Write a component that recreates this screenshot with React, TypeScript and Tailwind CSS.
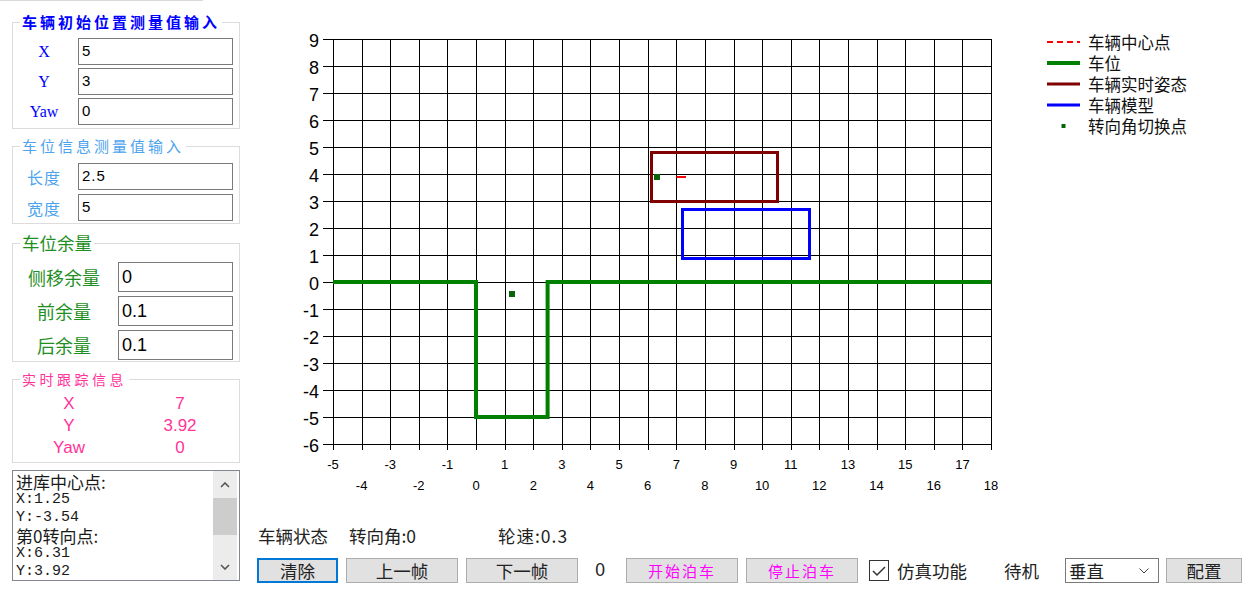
import React from "react";

const CJK = "font-['Noto_Sans_CJK_SC',sans-serif]";
const ARIAL = "font-['Liberation_Sans','Noto_Sans_CJK_SC',sans-serif]";
const SERIF = "font-['Liberation_Serif','Noto_Sans_CJK_SC',serif]";
const MONO = "font-['Liberation_Mono','Noto_Sans_CJK_SC',monospace]";

function Chart() {
  const X0 = 83;
  const XS = 658 / 23;
  const Y0 = 39;
  const YS = 27;
  const sx = (v: number) => X0 + (v + 5) * XS;
  const sy = (v: number) => Y0 + (9 - v) * YS;
  const p = (n: number) => Math.round(n) + 0.5;
  const xs = Array.from({ length: 24 }, (_, i) => i - 5);
  const ys = Array.from({ length: 16 }, (_, i) => i - 6);
  const green = [
    [-5, 0],
    [0, 0],
    [0, -5],
    [2.5, -5],
    [2.5, 0],
    [18, 0],
  ]
    .map(([a, b]) => `${sx(a).toFixed(1)},${sy(b).toFixed(1)}`)
    .join(" ");
  return (
    <svg
      width={780}
      height={520}
      className="shrink-0 block"
      fontFamily="'Liberation Sans', Arial, sans-serif"
    >
      {xs.map((v) => (
        <line key={"v" + v} x1={p(sx(v))} x2={p(sx(v))} y1={39} y2={450} stroke="#000" strokeWidth={1} />
      ))}
      {ys.map((v) => (
        <line key={"h" + v} x1={73} x2={742} y1={p(sy(v))} y2={p(sy(v))} stroke="#000" strokeWidth={1} />
      ))}
      {ys.map((v) => (
        <text key={"yl" + v} x={69} y={sy(v) + 8} textAnchor="end" fontSize={18} fill="#000">
          {v}
        </text>
      ))}
      {xs.map((v) => (
        <text
          key={"xl" + v}
          x={sx(v)}
          y={Math.abs(v) % 2 === 1 ? 469 : 490}
          textAnchor="middle"
          fontSize={13}
          fill="#000"
        >
          {v}
        </text>
      ))}
      <polyline points={green} fill="none" stroke="#008000" strokeWidth={4} strokeLinejoin="miter" />
      <rect x={401.5} y={152.5} width={126} height={49} fill="none" stroke="#800000" strokeWidth={3} />
      <rect x={432.5} y={209.5} width={127} height={49} fill="none" stroke="#0000ff" strokeWidth={3} />
      <rect x={404} y={174} width={6} height={6} fill="#0a640a" />
      <line x1={426.5} x2={436} y1={177} y2={177} stroke="#ff0000" strokeWidth={2} />
      <rect x={259} y={291} width={6} height={6} fill="#0a640a" />
    </svg>
  );
}

function Legend() {
  return (
    <div className={`flex-1 flex flex-col pt-[31px] ${CJK} text-[16.5px] text-[#111]`}>
      <div className="h-[21px] flex items-center">
        <svg width={33} height={8} className="ml-[17px] shrink-0">
          <line x1={0} x2={33} y1={4} y2={4} stroke="#ff0000" strokeWidth={2} strokeDasharray="6 4" />
        </svg>
        <span className="ml-[8px] leading-[18px]">车辆中心点</span>
      </div>
      <div className="h-[21px] flex items-center">
        <svg width={33} height={8} className="ml-[17px] shrink-0">
          <line x1={0} x2={33} y1={4} y2={4} stroke="#008000" strokeWidth={4} />
        </svg>
        <span className="ml-[8px] leading-[18px]">车位</span>
      </div>
      <div className="h-[21px] flex items-center">
        <svg width={33} height={8} className="ml-[17px] shrink-0">
          <line x1={0} x2={33} y1={4} y2={4} stroke="#800000" strokeWidth={3} />
        </svg>
        <span className="ml-[8px] leading-[18px]">车辆实时姿态</span>
      </div>
      <div className="h-[21px] flex items-center">
        <svg width={33} height={8} className="ml-[17px] shrink-0">
          <line x1={0} x2={33} y1={4} y2={4} stroke="#0000ff" strokeWidth={3} />
        </svg>
        <span className="ml-[8px] leading-[18px]">车辆模型</span>
      </div>
      <div className="h-[21px] flex items-center">
        <svg width={33} height={8} className="ml-[17px] shrink-0">
          <rect x={14.5} y={2} width={4} height={4} fill="#0a640a" />
        </svg>
        <span className="ml-[8px] leading-[18px]">转向角切换点</span>
      </div>
    </div>
  );
}

function LeftPanel() {
  const g1 = [
    ["X", "5"],
    ["Y", "3"],
    ["Yaw", "0"],
  ];
  const g2 = [
    ["长度", "2.5"],
    ["宽度", "5"],
  ];
  const g3 = [
    ["侧移余量", "0"],
    ["前余量", "0.1"],
    ["后余量", "0.1"],
  ];
  const g4 = [
    ["X", "7"],
    ["Y", "3.92"],
    ["Yaw", "0"],
  ];
  return (
    <div className={`w-[250px] shrink-0 flex flex-col pl-[12px] ${CJK}`}>
      <div className="-ml-[12px] w-[203px] h-[1px] bg-[#d9d9d9]" />

      <fieldset className="mt-[11px] w-[228px] border border-[#dcdcdc] pb-[3px]">
        <legend className="ml-[7px] px-[2px] text-[15px] leading-[20px] font-bold tracking-[3px] text-[#0000ff]">
          车辆初始位置测量值输入
        </legend>
        <div className="flex flex-col gap-[3px] pt-[6px]">
          {g1.map(([l, v]) => (
            <div key={l} className="flex items-center h-[27px]">
              <div className={`w-[62px] text-center text-[16px] leading-none text-[#0000ff] ${SERIF}`}>{l}</div>
              <div
                className={`ml-[3px] w-[155px] h-[27px] border border-[#7a7a7a] px-[3px] flex items-center text-[15px] text-black ${ARIAL}`}
              >
                {v}
              </div>
            </div>
          ))}
        </div>
      </fieldset>

      <fieldset className="mt-[7px] w-[228px] border border-[#dcdcdc] pb-[2px]">
        <legend className="ml-[7px] px-[2px] text-[15px] leading-[20px] tracking-[3px] text-[#4da3ee]">
          车位信息测量值输入
        </legend>
        <div className="flex flex-col gap-[4px] pt-[7px]">
          {g2.map(([l, v]) => (
            <div key={l} className="flex items-center h-[27px]">
              <div className="w-[62px] text-center text-[16px] tracking-[1px] leading-none text-[#4da3ee]">{l}</div>
              <div
                className={`ml-[3px] w-[155px] h-[27px] border border-[#7a7a7a] px-[3px] flex items-center text-[15px] tracking-[1px] text-black ${ARIAL}`}
              >
                {v}
              </div>
            </div>
          ))}
        </div>
      </fieldset>

      <fieldset className="mt-[7px] w-[228px] border border-[#dcdcdc] pb-[1px]">
        <legend className="ml-[7px] px-[2px] text-[17.5px] leading-[24px] text-[#1f8f1f]">车位余量</legend>
        <div className="flex flex-col gap-[4px] pt-[7px]">
          {g3.map(([l, v]) => (
            <div key={l} className="flex items-center h-[30px]">
              <div className="w-[102px] text-center text-[18px] leading-none text-[#1f8f1f]">{l}</div>
              <div
                className={`ml-[3px] w-[115px] h-[30px] border border-[#7a7a7a] px-[3px] flex items-center text-[18px] text-black ${ARIAL}`}
              >
                {v}
              </div>
            </div>
          ))}
        </div>
      </fieldset>

      <fieldset className="mt-[7px] w-[228px] border border-[#dcdcdc] pb-[4px]">
        <legend className="ml-[7px] px-[2px] text-[14px] leading-[20px] tracking-[3.5px] text-[#ff3399]">
          实时跟踪信息
        </legend>
        <div className={`flex flex-col pt-[3px] text-[17px] text-[#ff3399] ${ARIAL}`}>
          {g4.map(([l, v]) => (
            <div key={l} className="flex items-center h-[22px]">
              <div className="w-[112px] text-center leading-none">{l}</div>
              <div className="w-[110px] text-center leading-none">{v}</div>
            </div>
          ))}
        </div>
      </fieldset>

      <div className="mt-[7px] w-[228px] h-[111px] border border-[#828790] flex">
        <div className="flex-1 pl-[3px] pt-[1px] text-[#1a1a1a]">
          <div className="h-[18px] flex items-center whitespace-nowrap text-[17px] leading-none">进库中心点:</div>
          <div className={`h-[18px] flex items-center ${MONO} text-[15px] leading-none`}>X:1.25</div>
          <div className={`h-[18px] flex items-center ${MONO} text-[15px] leading-none`}>Y:-3.54</div>
          <div className="h-[18px] flex items-center whitespace-nowrap text-[17px] leading-none">第0转向点:</div>
          <div className={`h-[18px] flex items-center ${MONO} text-[15px] leading-none`}>X:6.31</div>
          <div className={`h-[18px] flex items-center ${MONO} text-[15px] leading-none`}>Y:3.92</div>
        </div>
        <div className="w-[24px] mr-[2px] bg-[#ececec] flex flex-col">
          <div className="h-[27px] flex items-center justify-center">
            <svg width={10} height={6}>
              <polyline points="1,5 5,1 9,5" fill="none" stroke="#555" strokeWidth={1.6} />
            </svg>
          </div>
          <div className="h-[37px] bg-[#cdcdcd]" />
          <div className="flex-1" />
          <div className="h-[27px] flex items-center justify-center">
            <svg width={10} height={6}>
              <polyline points="1,1 5,5 9,1" fill="none" stroke="#555" strokeWidth={1.6} />
            </svg>
          </div>
        </div>
      </div>
    </div>
  );
}

function StatusRow() {
  return (
    <div className={`h-[32px] flex items-center pl-[8px] text-[17.5px] text-[#222] ${CJK}`}>
      <span className="w-[91px] leading-none">车辆状态</span>
      <span className="w-[149px] leading-none">转向角:0</span>
      <span className="leading-none tracking-[1px]">轮速:0.3</span>
    </div>
  );
}

function ButtonRow() {
  const btn = "h-[25px] bg-[#e1e1e1] border border-[#adadad] flex items-center justify-center leading-none";
  return (
    <div className={`h-[25px] mt-[6px] flex items-center pl-[7px] text-[17.5px] text-[#222] ${CJK}`}>
      <div className="w-[81px] h-[25px] bg-[#e1e1e1] border-2 border-[#0078d7] flex items-center justify-center leading-none">
        清除
      </div>
      <div className={`ml-[8px] w-[112px] ${btn}`}>上一帧</div>
      <div className={`ml-[8px] w-[112px] ${btn}`}>下一帧</div>
      <div className={`w-[44px] text-center leading-none ${ARIAL}`}>0</div>
      <div className={`ml-[4px] w-[112px] ${btn} text-[15px] tracking-[2px] text-[#ff00ff]`}>开始泊车</div>
      <div className={`ml-[8px] w-[112px] ${btn} text-[15px] tracking-[2px] text-[#ff00ff]`}>停止泊车</div>
      <div className="ml-[11px] w-[20px] h-[21px] border border-[#333] bg-white flex items-center justify-center">
        <svg width={16} height={14}>
          <polyline points="2,7 6,11 14,3" fill="none" stroke="#333" strokeWidth={1.5} />
        </svg>
      </div>
      <span className="ml-[8px] w-[107px] leading-none">仿真功能</span>
      <span className="w-[61px] leading-none">待机</span>
      <div className="w-[94px] h-[25px] border border-[#7a7a7a] bg-white flex items-center pl-[3px] pr-[9px] justify-between">
        <span className="leading-none">垂直</span>
        <svg width={10} height={6}>
          <polyline points="0.5,0.5 5,5 9.5,0.5" fill="none" stroke="#444" strokeWidth={1} />
        </svg>
      </div>
      <div className={`ml-[7px] w-[76px] ${btn}`}>配置</div>
    </div>
  );
}

export default function App() {
  return (
    <div className="w-[1255px] h-[599px] bg-white flex overflow-hidden text-[#111]">
      <LeftPanel />
      <div className="flex flex-col w-[1005px]">
        <div className="flex h-[520px]">
          <Chart />
          <Legend />
        </div>
        <StatusRow />
        <ButtonRow />
      </div>
    </div>
  );
}
